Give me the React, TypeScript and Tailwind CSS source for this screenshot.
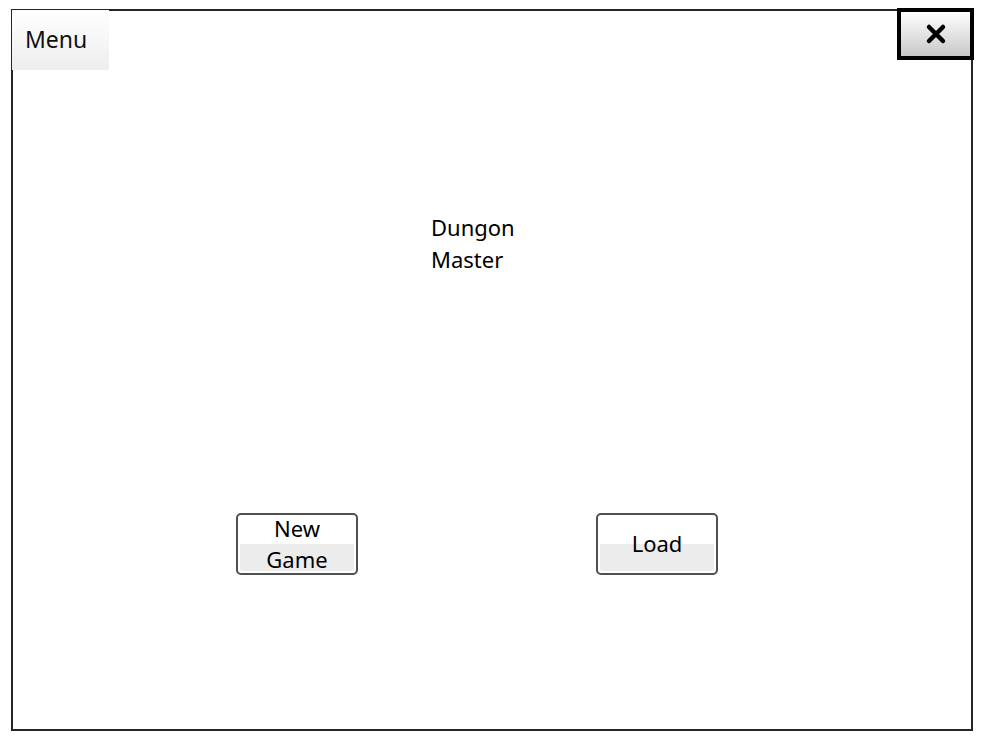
function GameButton({ lines }: { lines: string[] }) {
  return (
    <button
      type="button"
      className="w-[122px] h-[62px] rounded-[5px] border-2 border-[#505050] p-[2px] bg-white"
    >
      <div className="w-full h-full rounded-[2px] bg-[linear-gradient(#ffffff_0%,#ffffff_50%,#ececec_50%,#ececec_100%)] flex flex-col items-center justify-center -mt-[1px] text-[22px] leading-[31px] text-black">
        {lines.map((l) => (
          <span key={l}>{l}</span>
        ))}
      </div>
    </button>
  );
}

export default function App() {
  return (
    <div
      className="w-[985px] h-[741px] bg-white pt-[9px] pl-[11px] relative"
      style={{ fontFamily: '"Noto Sans", "Open Sans", sans-serif' }}
    >
      <div className="w-[962px] h-[722px] border-2 border-[#262626] flex flex-col">
        <div className="ml-[418px] mt-[200px] text-[22px] leading-[32px] text-black">
          <div>Dungon</div>
          <div>Master</div>
        </div>
        <div className="mt-[238px] ml-[223px] flex gap-[238px]">
          <GameButton lines={['New', 'Game']} />
          <GameButton lines={['Load']} />
        </div>
      </div>

      {/* menu tab sits over the frame corner */}
      <div className="absolute left-[12px] top-[10px] w-[97px] h-[60px] bg-[linear-gradient(#ffffff,#eeeeee)] flex items-center pl-[13px] pb-[2px] text-[23px] text-[#111]">
        Menu
      </div>

      {/* close button */}
      <button
        type="button"
        className="absolute left-[897px] top-[8px] w-[77px] h-[52px] border-[4px] border-black bg-[linear-gradient(#ffffff,#c8c8c8)] flex items-center justify-center"
      >
        <svg width="22" height="22" viewBox="0 0 22 22">
          <path d="M4 4 L18 18 M18 4 L4 18" stroke="#000" strokeWidth="4.5" strokeLinecap="round" />
        </svg>
      </button>
    </div>
  );
}
